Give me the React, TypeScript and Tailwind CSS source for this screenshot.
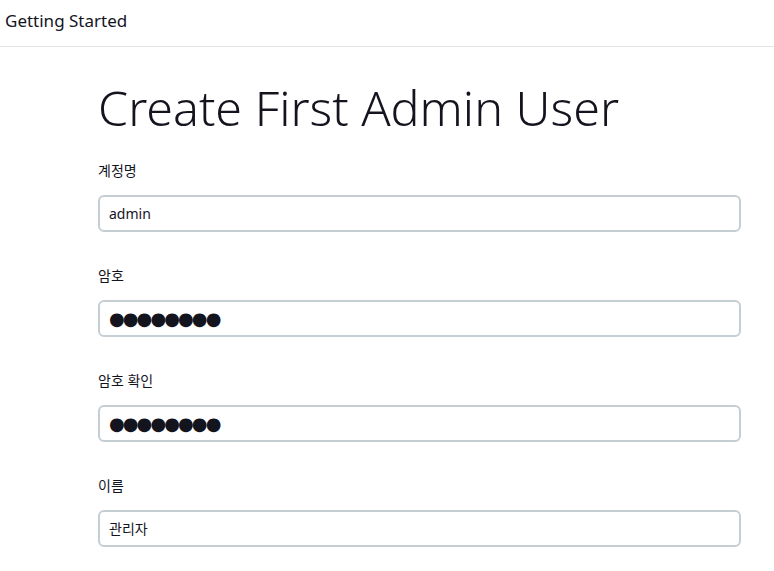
import React from 'react';

const font = { fontFamily: '"Noto Sans", "Noto Sans CJK KR", sans-serif' };

function Field({ label, value, password }: { label: string; value: string; password?: boolean }) {
  return (
    <div className="flex flex-col">
      <label className="text-[14px] text-[#14141f] h-[24px] leading-[24px]">{label}</label>
      <div className="mt-[12px] h-[37px] rounded-[6px] border-2 border-[#c5ced2] flex items-center px-[9px]">
        {password ? (
          <span className="text-[18px] tracking-[-1.9px] text-[#14141f] leading-none" style={{ fontFamily: '"DejaVu Sans", sans-serif' }}>
            {value}
          </span>
        ) : (
          <span className="text-[14px] text-[#14141f]">{value}</span>
        )}
      </div>
    </div>
  );
}

export default function App() {
  return (
    <div className="min-h-screen bg-white" style={font}>
      <header className="h-[47px] border-b border-[#e4e4e4] flex items-center px-[5px]">
        <span className="text-[17px] text-[#14141f] -mt-[4px]">Getting Started</span>
      </header>
      <main className="pl-[98px] pr-[33px]">
        <h1 className="text-[48.4px] font-light text-[#14141f] leading-none pt-[36px] pb-[28px]">Create First Admin User</h1>
        <div className="flex flex-col gap-[32px]">
          <Field label="계정명" value="admin" />
          <Field label="암호" value="●●●●●●●●" password />
          <Field label="암호 확인" value="●●●●●●●●" password />
          <Field label="이름" value="관리자" />
        </div>
      </main>
    </div>
  );
}
